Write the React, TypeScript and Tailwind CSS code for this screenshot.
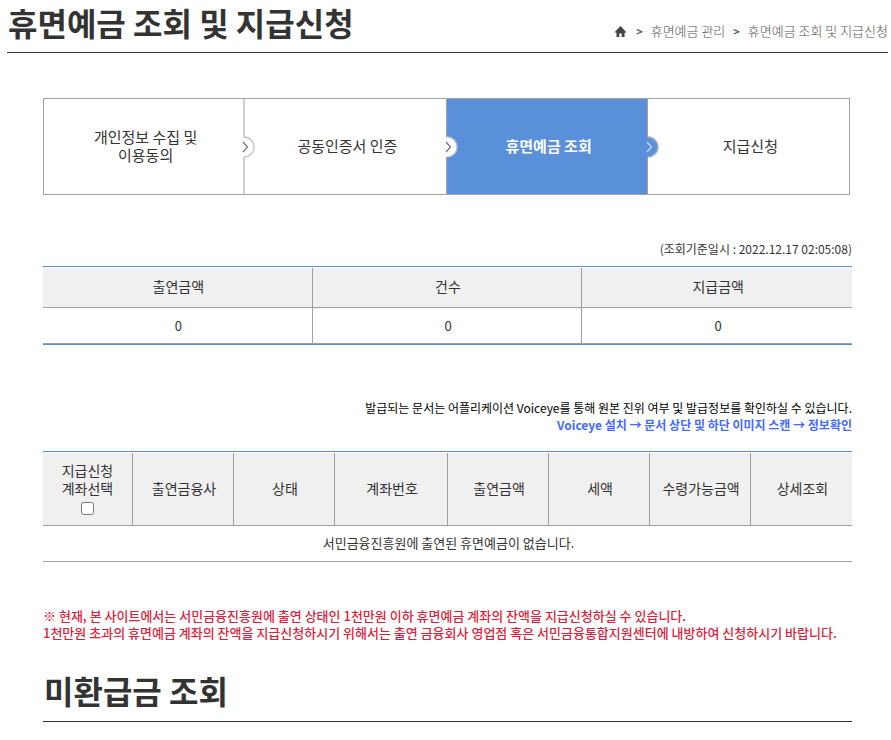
import React from "react";

type Step = { lines: string[]; active?: boolean };

const steps: Step[] = [
  { lines: ["개인정보 수집 및", "이용동의"] },
  { lines: ["공동인증서 인증"] },
  { lines: ["휴면예금 조회"], active: true },
  { lines: ["지급신청"] },
];

const summary = [
  { label: "출연금액", value: "0" },
  { label: "건수", value: "0" },
  { label: "지급금액", value: "0" },
];

const accountColumns = ["출연금융사", "상태", "계좌번호", "출연금액", "세액", "수령가능금액", "상세조회"];

function HomeIcon() {
  return (
    <svg width="11" height="11" viewBox="0 0 11 11" fill="#444" aria-hidden="true">
      <path d="M5.500 0 .3 5.600v1.200h1.200V11h2.800V7.600h2.400V11h2.800V6.800h1.200V5.600z" />
    </svg>
  );
}

function StepArrow({ active }: { active?: boolean }) {
  return (
    <svg
      className="absolute -right-3 top-1/2 z-10 -translate-y-1/2"
      width="16"
      height="22"
      viewBox="0 0 16 22"
      aria-hidden="true"
    >
      <path d="M3 1h2a10 10 0 0 1 0 20H3z" fill={active ? "#5a8fd9" : "#fff"} />
      <path d="M5 1a10 10 0 0 1 0 20" fill="none" stroke={active ? "#a3b4cc" : "#c4c4c4"} strokeWidth="1.3" />
      <path d="m4 6 4.500 5-4.500 5" fill="none" stroke={active ? "#c9daf3" : "#777"} strokeWidth="1.3" />
    </svg>
  );
}

function StepBar() {
  return (
    <ol className="mr-[2px] grid h-[97px] grid-cols-4 border border-[#a3a3a3]">
      {steps.map((step, i) => (
        <li
          key={step.lines[0]}
          aria-current={step.active ? "step" : undefined}
          className={
            "relative flex flex-col items-center justify-center pb-0.5 pl-1 text-[15px] leading-[18px] " +
            (step.active
              ? "border-r border-[#a3a3a3] bg-[#5a8fd9] font-bold text-white"
              : i === 0
                ? "border-r-2 border-[#cfcfcf]"
                : i === 1
                  ? "border-r border-[#a3a3a3]"
                  : "")
          }
        >
          {step.lines.map((line) => (
            <span key={line}>{line}</span>
          ))}
          {i < steps.length - 1 && <StepArrow active={step.active} />}
        </li>
      ))}
    </ol>
  );
}

function SummaryTable() {
  return (
    <div className="border-y border-[#5590d5] pt-px">
      <table className="w-full table-fixed border-separate border-spacing-0 text-center">
        <thead>
          <tr className="h-10 bg-[#f0f0f0]">
            {summary.map((s) => (
              <th
                key={s.label}
                scope="col"
                className="border-b border-r border-[#a0a0a0] pb-[3px] pl-0.5 text-[14px] font-normal leading-[18px] last:border-r-0"
              >
                {s.label}
              </th>
            ))}
          </tr>
        </thead>
        <tbody>
          <tr className="h-9">
            {summary.map((s) => (
              <td
                key={s.label}
                className="border-b border-r border-[#a0a0a0] pl-0.5 text-[13px] leading-[18px] last:border-r-0"
              >
                {s.value}
              </td>
            ))}
          </tr>
        </tbody>
      </table>
    </div>
  );
}

function AccountTable() {
  return (
    <div className="border-t border-[#5590d5] pt-px">
      <table className="w-full table-fixed border-separate border-spacing-0 text-center">
        <colgroup>
          <col className="w-[90px]" />
          <col />
          <col />
          <col className="w-[14%]" />
          <col />
          <col />
          <col />
          <col />
        </colgroup>
        <thead>
          <tr className="h-[73px] bg-[#f0f0f0]">
            <th
              scope="col"
              className="border-b border-r border-[#a0a0a0] pb-[3px] text-[14px] font-normal leading-[18px]"
            >
              <label className="flex flex-col items-center">
                <span>지급신청</span>
                <span>계좌선택</span>
                <input type="checkbox" className="mt-[5px] size-[13px]" />
              </label>
            </th>
            {accountColumns.map((c) => (
              <th
                key={c}
                scope="col"
                className="border-b border-r border-[#a0a0a0] pb-[3px] pl-0.5 text-[14px] font-normal leading-[18px] last:border-r-0"
              >
                {c}
              </th>
            ))}
          </tr>
        </thead>
        <tbody>
          <tr className="h-9">
            <td colSpan={8} className="border-b border-[#a0a0a0] pb-0.5 pl-0.5 text-[13px] leading-[18px]">
              서민금융진흥원에 출연된 휴면예금이 없습니다.
            </td>
          </tr>
        </tbody>
      </table>
    </div>
  );
}

export default function App() {
  return (
    <div className="bg-white pb-4 pl-[7px] pr-[3px] font-['Noto_Sans_CJK_KR',sans-serif] text-[#333]">
      <header className="flex h-[53px] items-start justify-between border-b border-[#333]">
        <h1 className="pl-px text-[32px] font-bold leading-[44px]">휴면예금 조회 및 지급신청</h1>
        <nav aria-label="breadcrumb" className="flex items-center pt-[21px] text-[13px] font-light leading-[20px] text-[#555]">
          <a href="#" aria-label="홈">
            <HomeIcon />
          </a>
          <span className="ml-2.5 mr-2 text-[11px] font-bold">&gt;</span>
          <a href="#">휴면예금 관리</a>
          <span className="mx-2 text-[11px] font-bold">&gt;</span>
          <a href="#">휴면예금 조회 및 지급신청</a>
        </nav>
      </header>

      <main className="ml-9 mr-9 pt-[45px]">
        <StepBar />

        <p className="mb-2 mt-[45px] text-right text-[12px] leading-[18px]">
          (조회기준일시 : 2022.12.17 02:05:08)
        </p>
        <SummaryTable />

        <div className="mb-[18px] mt-[54px] text-right text-[12px] leading-[17px]">
          <p className="text-black">
            발급되는 문서는 어플리케이션 Voiceye를 통해 원본 진위 여부 및 발급정보를 확인하실 수 있습니다.
          </p>
          <p className="font-bold text-[#456aff]">
            Voiceye 설치 → 문서 상단 및 하단 이미지 스캔 → 정보확인
          </p>
        </div>
        <AccountTable />

        <p className="mt-[45px] text-[13px] font-medium leading-[17px] text-[#dc1f3c]">
          ※ 현재, 본 사이트에서는 서민금융진흥원에 출연 상태인 1천만원 이하 휴면예금 계좌의 잔액을 지급신청하실 수 있습니다.
          <br />
          1천만원 초과의 휴면예금 계좌의 잔액을 지급신청하시기 위해서는 출연 금융회사 영업점 혹은 서민금융통합지원센터에 내방하여 신청하시기 바랍니다.
        </p>

        <h2 className="mt-[27px] border-b border-[#333] pb-[9px] pl-px text-[32px] font-bold leading-[44px]">
          미환급금 조회
        </h2>
      </main>
    </div>
  );
}
